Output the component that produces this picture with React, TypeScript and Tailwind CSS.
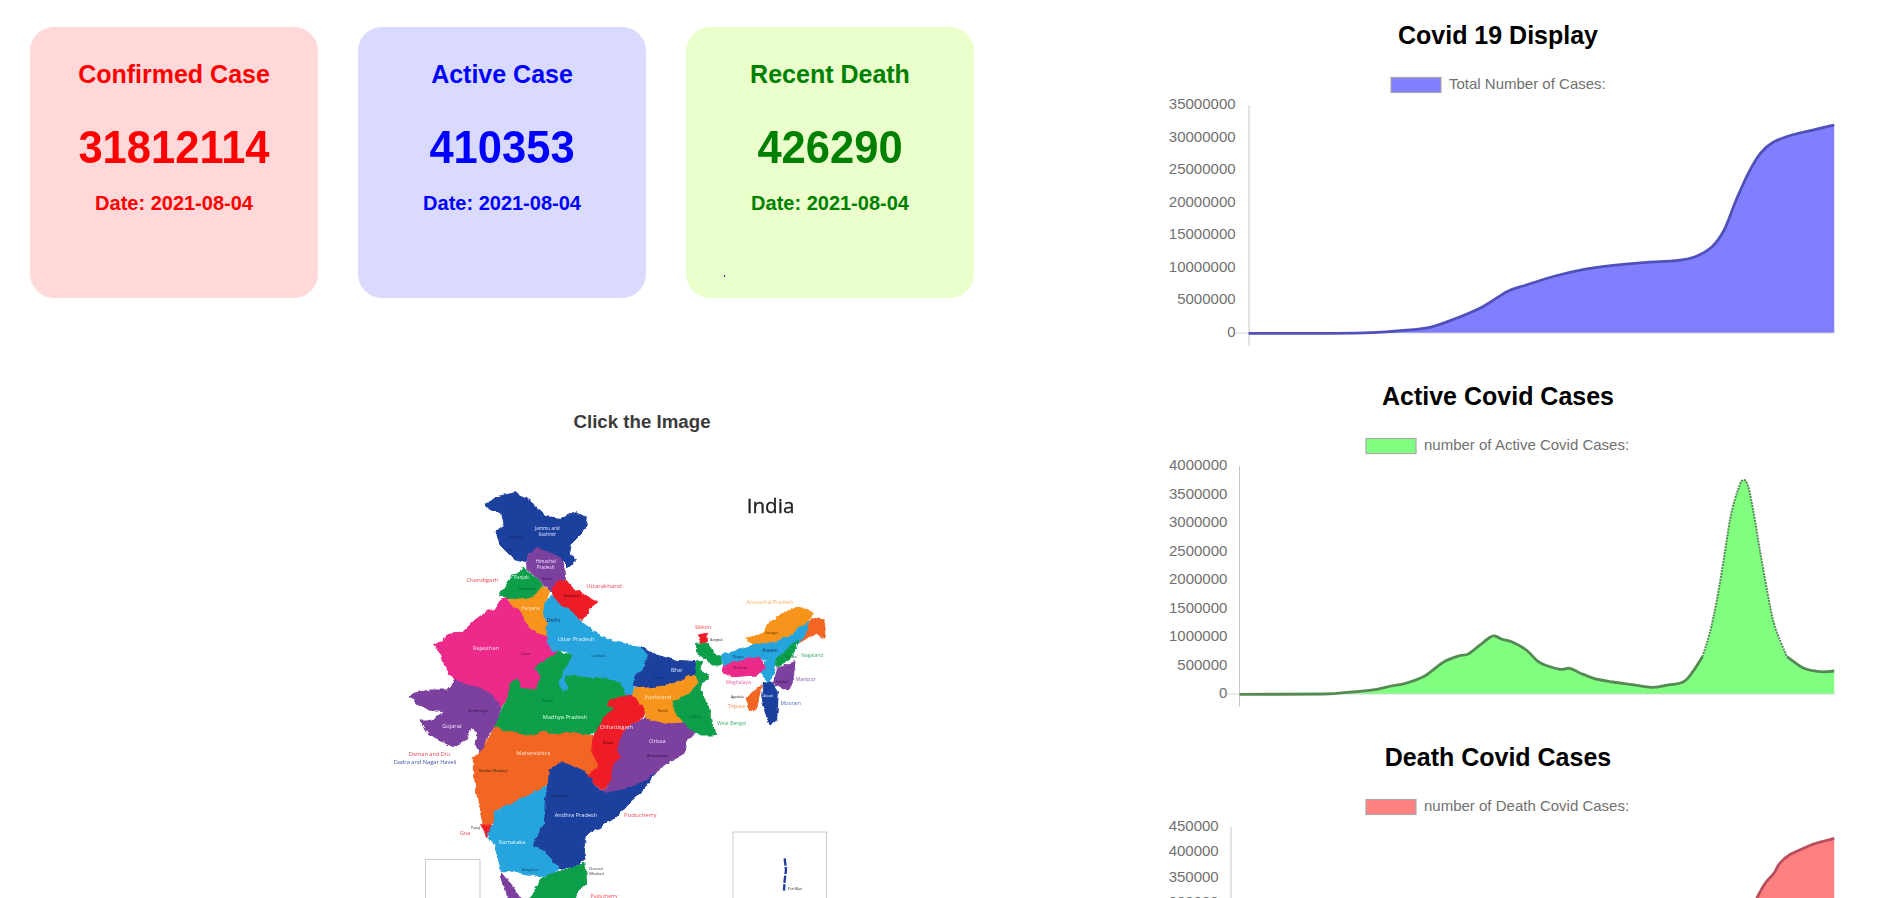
import React from "react";

type Pt = [number, number];
const SX = 1568 / 757;

function smooth(p: Pt[]) {
  let d = `M${p[0][0].toFixed(1)},${p[0][1].toFixed(1)}`;
  for (let i = 0; i < p.length - 1; i++) {
    const a = p[Math.max(i - 1, 0)], b = p[i], c = p[i + 1], e = p[Math.min(i + 2, p.length - 1)];
    const c1: Pt = [b[0] + (c[0] - a[0]) / 6, b[1] + (c[1] - a[1]) / 6];
    const c2: Pt = [c[0] - (e[0] - b[0]) / 6, c[1] - (e[1] - b[1]) / 6];
    d += `C${c1[0].toFixed(1)},${c1[1].toFixed(1)} ${c2[0].toFixed(1)},${c2[1].toFixed(1)} ${c[0].toFixed(1)},${c[1].toFixed(1)}`;
  }
  return d;
}

const FONT = "'Liberation Sans', Arial, sans-serif";

type ChartProps = {
  title: string; legend: string; legendX: number; legendTextX: number; axisX: number; labelX: number;
  ticks: string[]; step: number; fill: string; stroke: string; pts: number[][]; dy: number; steep?: [number, number];
};

function Chart({ title, legend, legendX, legendTextX, axisX, labelX, ticks, step, fill, stroke, pts, dy, steep }: ChartProps) {
  const p: Pt[] = pts.map(([x, y]) => [Math.min(x / SX - 21, 674), y / 3 - dy]);
  const line = smooth(p);
  const last = p[p.length - 1];
  return (
    <svg viewBox="0 0 674 361" className="block w-[674px] h-[361px] shrink-0" style={{ fontFamily: FONT }}>
      <text x="337" y="35" textAnchor="middle" dominantBaseline="central" fontSize="25" fontWeight="700" fill="#000">{title}</text>
      <rect x={legendX} y="77.5" width="50" height="15" fill={fill} stroke="#a8a8a8" strokeWidth="1.2" />
      <text x={legendTextX} y="83" dominantBaseline="central" fontSize="15" fill="#707070">{legend}</text>
      <path d={`${line}L${last[0]},333L${p[0][0]},333Z`} fill={fill} />
      <line x1={axisX} y1="105" x2={axisX} y2="346" stroke="#c8c8c8" strokeWidth="1" />
      <line x1={labelX} y1="333" x2="674" y2="333" stroke="#cfcfcf" strokeWidth="1" opacity="0.8" />
      {steep ? (
        <>
          <path d={smooth(p.slice(0, steep[0] + 1))} fill="none" stroke={stroke} strokeWidth="2.8" />
          <path d={smooth(p.slice(steep[0], steep[1] + 1))} fill="none" stroke={stroke} strokeWidth="2" strokeDasharray="2 1" />
          <path d={smooth(p.slice(steep[1]))} fill="none" stroke={stroke} strokeWidth="2.8" />
        </>
      ) : (
        <path d={line} fill="none" stroke={stroke} strokeWidth="2.8" />
      )}
      {ticks.map((t, i) => (
        <text key={t} x={labelX} y={103.5 + i * step} textAnchor="end" dominantBaseline="central" fontSize="15" fill="#707070">{t}</text>
      ))}
    </svg>
  );
}

const total = [[225,1000],[400,1000],[480,998],[540,992],[600,982],[650,958],[710,920],[760,875],[800,855],[860,828],[920,808],[980,796],[1050,787],[1110,782],[1150,770],[1185,740],[1210,690],[1235,600],[1260,520],[1285,460],[1310,428],[1350,405],[1400,388],[1438,375]];
const active = [[206,1003],[380,1002],[430,997],[490,988],[520,978],[550,970],[585,952],[605,932],[630,905],[660,888],[680,882],[700,860],[725,832],[735,828],[750,838],[770,845],[800,870],[825,905],[845,918],[870,928],[890,925],[910,938],[940,955],[980,966],[1020,974],[1060,982],[1090,976],[1125,966],[1145,935],[1165,890],[1180,820],[1195,720],[1210,590],[1222,480],[1232,420],[1240,385],[1247,362],[1258,372],[1270,450],[1285,580],[1300,700],[1315,800],[1340,890],[1375,925],[1410,935],[1438,933]];
const death = [[189,1005],[700,1000],[900,930],[1100,880],[1200,760],[1250,620],[1278,534],[1295,490],[1313,460],[1325,430],[1345,405],[1385,378],[1405,368],[1438,355]];

const C = { blue: "#1f3f9e", lblue: "#27a4dd", green: "#0a9e4a", pink: "#ec2a8a", purple: "#7b3f9e", red: "#ee1c25", orange: "#f7941d", dorange: "#f26522" };

const states: [string, string][] = [
  [C.blue, "318,105 350,80 405,68 440,85 470,115 500,140 540,145 585,128 622,142 615,180 590,205 570,225 565,250 590,270 565,292 535,262 500,245 470,232 445,255 438,275 400,265 375,240 360,225 348,185 372,165 365,130 330,120"],
  [C.purple, "445,255 470,232 500,245 540,262 552,295 560,328 530,345 515,368 490,345 470,325 440,295"],
  [C.green, "430,288 448,310 472,328 490,350 470,375 440,385 420,390 385,385 358,378 380,345 395,315 415,310"],
  [C.red, "530,335 560,332 575,352 610,372 650,395 625,425 605,450 575,425 540,405 520,385 518,360"],
  [C.orange, "385,390 440,385 470,375 485,350 510,365 495,395 490,440 505,460 500,500 470,490 445,470 420,425 395,410"],
  [C.pink, "360,390 385,385 395,410 420,425 445,470 470,490 500,500 515,540 535,545 490,575 465,595 480,620 470,660 425,655 410,625 390,640 385,680 365,710 330,670 280,650 225,630 195,590 185,555 160,525 190,510 205,490 250,485 285,450 320,425 350,415"],
  [C.lblue, "490,440 495,395 515,375 540,405 575,425 610,460 650,490 700,515 750,525 785,530 805,545 795,590 760,630 760,680 735,680 725,640 680,625 640,625 590,620 555,615 565,660 545,665 535,640 545,605 565,585 575,555 550,540 535,545 515,540 500,500 505,460"],
  [C.blue, "785,530 830,555 880,570 945,575 950,610 925,620 880,640 840,650 790,655 760,650 765,620 795,590 805,555"],
  [C.green, "555,615 590,620 640,625 680,625 725,640 735,680 690,690 685,705 700,715 670,750 645,790 620,795 570,790 530,795 490,785 460,800 400,790 365,780 345,770 350,750 370,710 385,680 390,640 410,625 425,655 470,660 480,620 465,595 490,575 535,545 575,555 565,585 545,605 535,640 545,665 565,660"],
  [C.purple, "90,680 100,670 150,660 200,660 225,630 280,650 330,670 365,710 350,750 345,770 325,790 310,830 300,850 285,820 295,790 270,770 260,810 220,830 175,810 135,780 120,750 160,750 190,725 150,720 115,705"],
  [C.dorange, "345,770 365,780 400,790 460,800 490,785 530,795 570,790 620,795 640,800 635,840 655,890 625,915 580,890 540,875 510,900 500,945 450,975 400,1000 350,1020 345,1060 310,1065 295,1000 280,900 280,860 300,850 310,830"],
  [C.red, "305,1065 335,1065 335,1095 320,1100"],
  [C.lblue, "345,1025 400,1000 450,975 505,945 495,1000 495,1060 470,1100 460,1125 500,1150 540,1195 520,1210 480,1220 440,1215 400,1205 365,1205 345,1130 325,1095 340,1065"],
  [C.blue, "540,875 580,890 625,915 660,965 720,960 790,935 830,905 790,960 740,1005 710,1040 670,1065 620,1095 610,1140 615,1170 585,1190 540,1195 500,1150 460,1125 470,1100 495,1060 495,1000 510,900"],
  [C.red, "690,690 760,672 795,720 790,745 745,770 720,810 712,840 725,860 700,880 695,930 665,965 625,915 655,890 635,840 640,800 670,750 700,715 685,705"],
  [C.purple, "800,745 860,760 910,755 945,790 920,815 915,850 870,875 830,905 790,935 720,960 670,965 695,930 700,880 725,860 712,840 720,810 745,770"],
  [C.orange, "765,655 790,655 840,650 880,640 925,620 945,612 955,640 930,670 880,695 880,720 915,755 860,760 800,745 795,720 760,672"],
  [C.green, "950,575 965,570 960,600 990,620 965,640 960,660 985,710 1000,770 1010,795 965,795 945,790 910,755 880,720 880,695 930,670 955,640 945,612"],
  [C.red, "952,495 980,490 982,515 965,520"],
  [C.green, "950,520 985,520 1000,550 1025,560 1025,585 1000,585 975,565 950,550"],
  [C.orange, "1100,505 1150,490 1170,455 1210,430 1250,410 1285,420 1300,430 1285,455 1240,490 1190,515 1120,525"],
  [C.dorange, "1255,520 1285,460 1300,445 1335,450 1335,490 1330,505 1310,490 1280,505"],
  [C.lblue, "1025,555 1060,545 1120,525 1190,515 1240,490 1285,455 1280,490 1255,520 1230,530 1190,565 1185,600 1165,640 1140,605 1155,575 1130,560 1060,575 1030,590"],
  [C.green, "1255,510 1235,565 1190,590 1190,565 1230,530"],
  [C.pink, "1030,590 1060,575 1130,560 1160,590 1130,615 1060,620 1030,610"],
  [C.purple, "1195,590 1245,575 1240,620 1225,660 1180,640"],
  [C.blue, "1150,640 1175,635 1195,665 1190,750 1170,765 1155,725 1145,680"],
  [C.dorange, "1095,685 1145,645 1130,715 1110,722"],
  [C.green, "490,1220 520,1210 585,1190 615,1180 620,1240 590,1270 580,1300 440,1300 470,1250"],
  [C.purple, "360,1205 395,1245 430,1300 390,1300"],
];

const labels: [string, number, number, string, number?][] = [
  ["Jammu and", 502, 181, "#dfe6ff"], ["Kashmir", 502, 197, "#dfe6ff"], ["Himachal", 497, 279, "#f0e0ff"], ["Pradesh", 497, 297, "#f0e0ff"],
  ["Chandigarh", 307, 336, "#ef4a55", 18], ["Uttarakhand", 672, 354, "#ef4a55", 18], ["Punjab", 424, 328, "#dfffe8"], ["Haryana", 452, 421, "#ffe9c8"],
  ["Delhi", 520, 456, "#173060", 17], ["Uttar Pradesh", 588, 513, "#e6f7ff", 17], ["Rajasthan", 318, 541, "#ffe3f2", 17], ["Bihar", 890, 606, "#e0e8ff"],
  ["Jharkhand", 834, 686, "#ffe9c8", 17], ["Madhya Pradesh", 555, 746, "#e2ffea", 17], ["Chhattisgarh", 710, 778, "#ffe5e5", 17], ["Gujarat", 216, 773, "#efe3ff", 17],
  ["Orissa", 832, 820, "#efe3ff", 17], ["Maharashtra", 460, 856, "#ffe8d8", 17], ["Andhra Pradesh", 588, 1041, "#e0e8ff", 17], ["Karnataka", 396, 1122, "#e6f7ff", 17],
  ["Daman and Diu", 148, 857, "#ef4a55", 17], ["Dadra and Nagar Haveli", 135, 883, "#4055a8", 17], ["Puducherry", 781, 1040, "#ef4a55", 18], ["Goa", 255, 1096, "#ef4a55", 17],
  ["Arunachal Pradesh", 1170, 401, "#f5b060", 16], ["Sikkim", 969, 477, "#ef4a55", 16], ["Assam", 1170, 545, "#173060", 15], ["Nagaland", 1297, 561, "#3cb070", 15],
  ["Meghalaya", 1075, 642, "#ee60a8", 15], ["Manipur", 1277, 632, "#8a60b0", 15], ["Mizoram", 1232, 706, "#5070b8", 15], ["Tripura", 1069, 713, "#f58a50", 15],
  ["West Bengal", 1055, 765, "#3cb070", 15], ["Channel", 648, 1200, "#333", 11], ["(Madras)", 650, 1214, "#333", 11], ["Puducherry", 672, 1284, "#ef4a55", 15],
  ["Srinagar", 407, 203, "#10204f", 10], ["Leh", 392, 243, "#10204f", 10], ["Shimla", 503, 329, "#2a1040", 10], ["Chandigarh", 442, 361, "#063", 10],
  ["Dehradun", 575, 380, "#400", 10], ["Jaipur", 437, 555, "#60103a", 10], ["Lucknow", 655, 562, "#10405a", 10], ["Patna", 835, 627, "#10204f", 10],
  ["Ranchi", 849, 725, "#5a3000", 10], ["Bhopal", 502, 697, "#063", 10], ["Raipur", 684, 822, "#400", 10], ["Gandhinagar", 294, 727, "#2a1040", 10],
  ["Bhubaneswar", 833, 860, "#2a1040", 10], ["Mumbai (Bombay)", 340, 905, "#222", 10], ["Hyderabad", 538, 981, "#10204f", 10], ["Panaji", 287, 1078, "#222", 10],
  ["Bangalore", 450, 1203, "#10405a", 10], ["Gangtok", 1009, 513, "#222", 10], ["Itanagar", 1175, 493, "#5a3000", 10], ["Dispur", 1075, 565, "#10405a", 11],
  ["Shillong", 1080, 596, "#60103a", 11], ["Kohima", 1232, 563, "#063", 10], ["Imphal", 1206, 640, "#2a1040", 10], ["Aizawl", 1165, 682, "#e0e8ff", 10],
  ["Agartala", 1072, 683, "#222", 10], ["Kolkata", 948, 745, "#063", 10], ["Port Blair", 1245, 1259, "#222", 10],
];

function IndiaMap() {
  return (
    <svg viewBox="0 0 1572 1284" className="block w-[524px] h-[428px] shrink-0 blur-[0.4px]" style={{ fontFamily: "'Open Sans', sans-serif" }}>
      <defs>
        <filter id="rough" x="-5%" y="-5%" width="110%" height="110%">
          <feTurbulence type="fractalNoise" baseFrequency="0.045" numOctaves="3" seed="4" result="n" />
          <feDisplacementMap in="SourceGraphic" in2="n" scale="14" xChannelSelector="R" yChannelSelector="G" />
        </filter>
      </defs>
      <g filter="url(#rough)">
        {states.map(([c, pts], i) => (
          <polygon key={i} points={pts} fill={c} stroke={c} strokeWidth="3" strokeLinejoin="round" />
        ))}
      </g>
      <rect x="137" y="1168" width="163" height="130" fill="none" stroke="#b5b5b5" strokeWidth="2" />
      <rect x="1059" y="1086" width="281" height="212" fill="none" stroke="#b5b5b5" strokeWidth="2" />
      <path d="M1214,1165 L1218,1200 L1214,1230 L1212,1262" fill="none" stroke={C.blue} strokeWidth="7" strokeDasharray="22 4" />
      {labels.map(([t, x, y, c, s], i) => (
        <text key={i} x={x} y={y} textAnchor="middle" fontSize={s ?? 14} fill={c}>{t}</text>
      ))}
      <text x="1100" y="129" fontSize="62" fill="#222" stroke="#222" strokeWidth="1">India</text>
    </svg>
  );
}

const cards = [
  { title: "Confirmed Case", value: "31812114", bg: "bg-[#ffd9d9]", text: "text-[#ff0000]", dot: false },
  { title: "Active Case", value: "410353", bg: "bg-[#dadaff]", text: "text-[#0000ff]", dot: false },
  { title: "Recent Death", value: "426290", bg: "bg-[#eaffcb]", text: "text-[#008000]", dot: true },
];

export default function App() {
  return (
    <div className="flex h-[898px] w-[1897px] overflow-hidden bg-white font-['Liberation_Sans',Arial,sans-serif]">
      <div className="flex w-[1161px] shrink-0 flex-col">
        <div className="flex gap-[40px] pl-[30px] pt-[27px]">
          {cards.map((c) => (
            <div key={c.title} className={`flex h-[271px] w-[288px] flex-col items-center rounded-[24px] pt-[33px] font-bold ${c.bg} ${c.text}`}>
              <div className="text-[25px] leading-[29px]">{c.title}</div>
              <div className="mt-[33px] scale-y-[1.07] text-[43.5px] leading-[50px]">{c.value}</div>
              <div className="mt-[20px] text-[20px] leading-[23px]">Date: 2021-08-04</div>
              {c.dot && <div className="ml-[-211px] mt-[60px] h-[2px] w-[1.5px] bg-[#20208a]" />}
            </div>
          ))}
        </div>
        <div className="mt-[113px] w-[1284px] text-center text-[18.7px] font-bold leading-[22px] text-[#3a3a3a]">Click the Image</div>
        <div className="ml-[380px] mt-[37px]"><IndiaMap /></div>
      </div>
      <div className="flex w-[674px] shrink-0 flex-col">
        <Chart title="Covid 19 Display" legend="Total Number of Cases:" legendX={230} legendTextX={288} axisX={88} labelX={74.6}
          ticks={["35000000","30000000","25000000","20000000","15000000","10000000","5000000","0"]} step={228 / 7}
          fill="#8080ff" stroke="#5050bb" pts={total} dy={0} />
        <Chart title="Active Covid Cases" legend="number of Active Covid Cases:" legendX={205} legendTextX={263} axisX={78.5} labelX={66.4}
          ticks={["4000000","3500000","3000000","2500000","2000000","1500000","1000000","500000","0"]} step={228 / 8}
          fill="#80ff80" stroke="#558a55" pts={active} dy={1} steep={[29, 42]} />
        <Chart title="Death Covid Cases" legend="number of Death Covid Cases:" legendX={205} legendTextX={263} axisX={70} labelX={57.7}
          ticks={["450000","400000","350000","300000"]} step={228 / 9}
          fill="#ff8080" stroke="#b84f5f" pts={death} dy={2} />
      </div>
    </div>
  );
}
